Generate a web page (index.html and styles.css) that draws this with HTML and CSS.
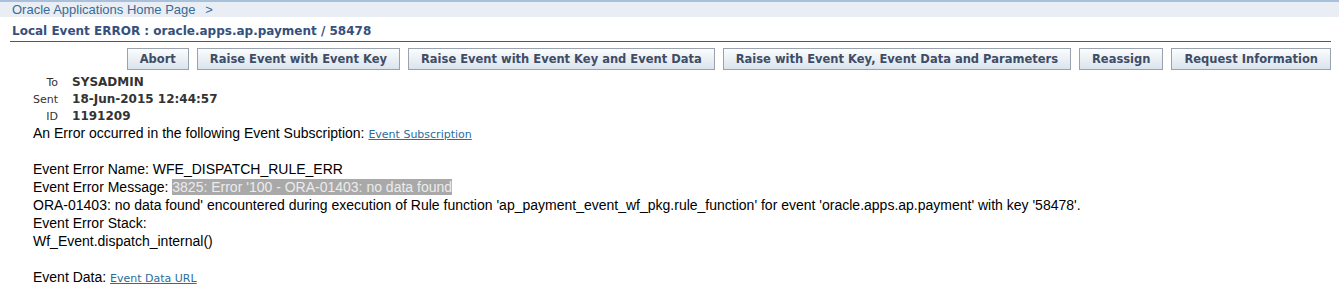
FILE: index.html
```html
<!DOCTYPE html>
<html lang="en">
  <head>
    <meta charset="UTF-8" />
    <title>Local Event ERROR</title>
    <link rel="stylesheet" href="styles.css">
  </head>
  <body>
    <div class="crumbs">
      <a href="#">Oracle Applications Home Page</a>
      <span class="sep">&gt;</span>
    </div>

    <h1 class="page-title">Local Event ERROR : oracle.apps.ap.payment / 58478</h1>

    <div class="actions">
      <button>Abort</button>
      <button>Raise Event with Event Key</button>
      <button>Raise Event with Event Key and Event Data</button>
      <button>Raise with Event Key, Event Data and Parameters</button>
      <button>Reassign</button>
      <button>Request Information</button>
    </div>

    <table class="header-info">
      <tr><td class="label">To</td><td class="value">SYSADMIN</td></tr>
      <tr><td class="label">Sent</td><td class="value">18-Jun-2015 12:44:57</td></tr>
      <tr><td class="label">ID</td><td class="value">1191209</td></tr>
    </table>

    <div class="message">
      An Error occurred in the following Event Subscription: <a href="#">Event Subscription</a><br>
      <br>
      Event Error Name: WFE_DISPATCH_RULE_ERR<br>
      Event Error Message: <span class="selected">3825: Error '100 - ORA-01403: no data found</span><br>
      ORA-01403: no data found' encountered during execution of Rule function 'ap_payment_event_wf_pkg.rule_function' for event 'oracle.apps.ap.payment' with key '58478'.<br>
      Event Error Stack:<br>
      Wf_Event.dispatch_internal()<br>
      <br>
      Event Data: <a href="#">Event Data URL</a>
    </div>
  </body>
</html>
```

FILE: styles.css
```css
body {
  margin: 0;
  padding: 0;
  background-color: #fff;
  font-family: "DejaVu Sans", sans-serif;
  color: #000;
}

.crumbs {
  background-color: #e9eef5;
  border-top: 2px solid #a8c0dc;
  height: 15px;
  padding: 0 0 0 12px;
  font-family: "Liberation Sans", Arial, sans-serif;
  font-size: 13px;
  line-height: 15px;
}

.crumbs a {
  color: #3a6a96;
  text-decoration: none;
}

.crumbs .sep {
  color: #3a6a96;
  margin-left: 6px;
}

.page-title {
  margin: 6px 8px 0 10px;
  padding: 0 0 2px 2px;
  border-bottom: 1px solid #3d5a87;
  font-family: "DejaVu Sans", sans-serif;
  font-size: 12px;
  line-height: 16px;
  font-weight: bold;
  color: #36507c;
}

.actions {
  display: flex;
  justify-content: flex-end;
  gap: 8px;
  margin: 6px 8px 0 0;
}

.actions button {
  height: 22px;
  padding: 0 12px;
  border: 1px solid #9aa3ad;
  background: linear-gradient(#fbfcfd, #dae4ed);
  font-family: "DejaVu Sans", sans-serif;
  font-size: 11.5px;
  font-weight: bold;
  color: #3f4c66;
  cursor: pointer;
}

.header-info {
  border-collapse: collapse;
  margin: 4px 0 0 31px;
}

.header-info td {
  padding: 0 2px;
  height: 17px;
  line-height: 17px;
}

.header-info .label {
  text-align: right;
  font-size: 11px;
  color: #333;
  padding-right: 12px;
}

.header-info .value {
  font-size: 12px;
  font-weight: bold;
  color: #333;
}

.message {
  margin: -1px 0 0 33px;
  font-family: "Liberation Sans", Arial, sans-serif;
  font-size: 14px;
  line-height: 18px;
  color: #000;
}

.message a {
  font-family: "DejaVu Sans", sans-serif;
  font-size: 11px;
  line-height: 1;
  color: #2b6d9b;
  text-decoration: underline;
}

.selected {
  background-color: #a9a9a9;
  color: #ececec;
}
```
